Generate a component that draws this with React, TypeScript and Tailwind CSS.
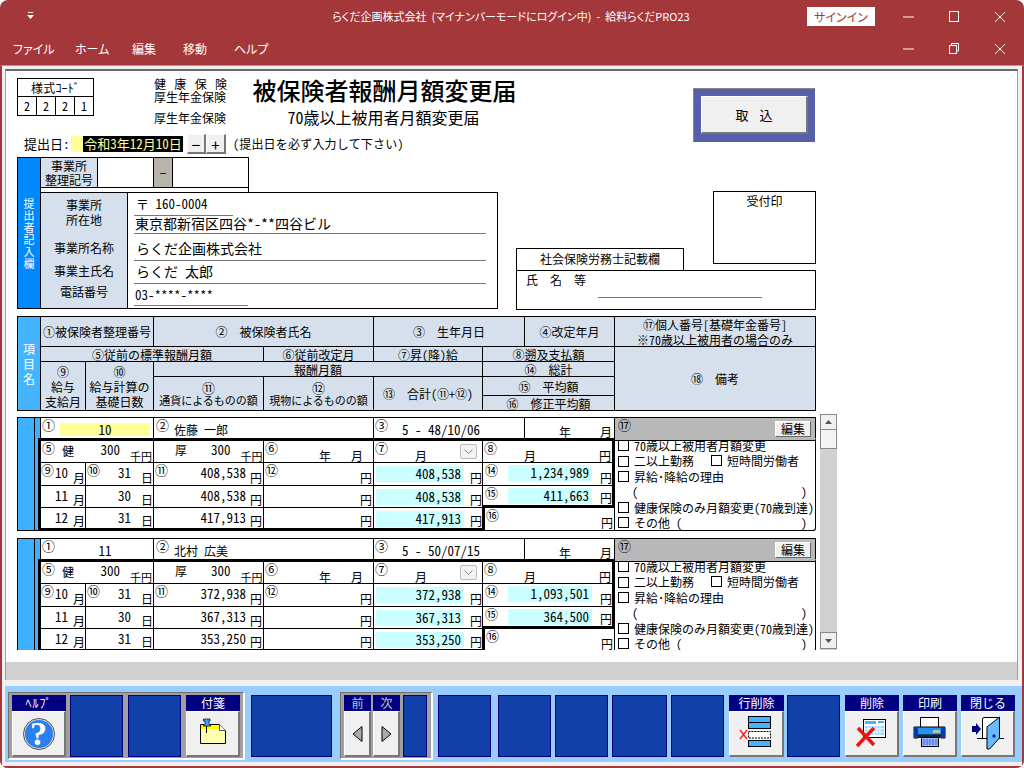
const UI_FONT = "font-['Noto_Sans_CJK_JP','Noto_Sans',sans-serif]";

// shared grid tracks of the form
const TRACKS = "grid-cols-[23px_45px_68px_110px_110px_109px_42px_90px_201px]";
const LBL = "border-r border-b border-black bg-[#d6e0ec] flex flex-col items-center justify-center leading-[15px] text-center whitespace-nowrap";
const LBL_SM = "border-r border-b border-black bg-[#d6e0ec] flex flex-col items-center justify-center leading-[13px] text-center text-[11px] whitespace-nowrap";
const BEVEL = "bg-[#f0f0f0] border-t border-l border-white border-r-2 border-b-2 border-r-[#777777] border-b-[#777777]";

const Slot = ({ className }: { className: string }) => (
  <div className={`h-[62px] border border-[#000080] bg-[#1040a8] shrink-0 ${className}`} />
);

const ToolBtn = ({ label, className, labelClass, children }: { label: string; className: string; labelClass?: string; children: React.ReactNode }) => (
  <div className={`flex flex-col h-[62px] shrink-0 ${className}`}>
    <div className={`h-[16px] bg-[#000080] text-[12px] leading-[16px] text-center ${labelClass ?? "text-white"}`}>{label}</div>
    <div className={`h-[46px] ${BEVEL} flex items-center justify-center overflow-hidden`}>
      {children}
    </div>
  </div>
);

const WinBtns = ({ restore }: { restore?: boolean }) => (
  <div className="flex items-center">
    <svg width="45" height="12" viewBox="0 0 45 12"><path d="M0 6H11" stroke="#fff" strokeWidth="1" /></svg>
    <svg width="46" height="12" viewBox="0 0 46 12" fill="none" stroke="#fff">
      {restore ? (
        <>
          <rect x="1.5" y="2.5" width="7" height="8" />
          <path d="M3.5 2V.5H10.5V8H9" />
        </>
      ) : (
        <rect x="1.5" y=".5" width="9" height="10" />
      )}
    </svg>
    <svg width="24" height="12" viewBox="0 0 24 12" fill="none" stroke="#fff"><path d="M1 1L11 11M11 1L1 11" /></svg>
  </div>
);

const Box = () => <span className="inline-block w-[11px] h-[11px] border border-black bg-white shrink-0" />;

type RecordData = {
  no: string;
  yellow?: boolean;
  name: string;
  birth: string;
  rows: { m: string; d: string; a: string }[];
  total: string;
  avg: string;
};

const records: RecordData[] = [
  {
    no: "10",
    yellow: true,
    name: "佐藤 一郎",
    birth: "5 - 48/10/06",
    rows: [
      { m: "10", d: "31", a: "408,538" },
      { m: "11", d: "30", a: "408,538" },
      { m: "12", d: "31", a: "417,913" },
    ],
    total: "1,234,989",
    avg: "411,663",
  },
  {
    no: "11",
    name: "北村 広美",
    birth: "5 - 50/07/15",
    rows: [
      { m: "10", d: "31", a: "372,938" },
      { m: "11", d: "30", a: "367,313" },
      { m: "12", d: "31", a: "353,250" },
    ],
    total: "1,093,501",
    avg: "364,500",
  },
];

const CELL = "border-r border-b border-black flex relative whitespace-nowrap";
const NUM = "text-[13px] leading-[16px] -mt-px h-[16px] shrink-0";

const Record = ({ r }: { r: RecordData }) => {
  return (
    <div className={`grid ${TRACKS} grid-rows-[20px_25px_23px_22px_23px] border-t border-l border-black text-[13px] leading-[14px] w-[799px] shrink-0`}>
      {/* blue strip */}
      <div className="row-span-5 flex bg-[#3db0ff] border-b border-r border-black">
        <div className="w-[17px] border-r border-black" />
      </div>
      {/* top row */}
      <div className="col-span-2 flex border-r border-black pl-[1px]">
        <span className={NUM}>①</span>
        <div className={`ml-[5px] mt-[5px] w-[90px] h-[13px] text-center leading-[14px] ${r.yellow ? "bg-[#ffff99]" : ""}`}>{r.no}</div>
      </div>
      <div className="col-span-2 flex border-r border-black pl-[2px]">
        <span className={NUM}>②</span>
        <div className="ml-[5px] mt-[4px] text-[12px] leading-[15px] whitespace-nowrap">{r.name}</div>
      </div>
      <div className="col-span-2 flex border-r border-black pl-[1px]">
        <span className={NUM}>③</span>
        <div className="ml-[14px] mt-[5px] whitespace-nowrap">{r.birth}</div>
      </div>
      <div className="flex items-end border-r border-black text-[12px] leading-[13px] pl-[34px] gap-[29px]">
        <span>年</span>
        <span>月</span>
      </div>
      <div className="flex justify-between bg-[#b8b8b8] border-r border-black pl-[3px] pr-[4px]">
        <span className={NUM}>⑰</span>
        <div className="mt-[3px] w-[36px] h-[16px] bg-[#f0f0f0] border border-white border-r-[#666666] border-b-[#666666] text-[12px] leading-[14px] text-center">編集</div>
      </div>

      {/* 5-8 row */}
      <div className={`${CELL} col-span-2 border-t-[3px] border-l-[3px] -ml-[3px] text-[12px]`}>
        <span className={`${NUM} ml-[1px]`}>⑤</span>
        <span className="ml-[7px] mt-[3px]">健</span>
        <span className="ml-auto mt-[2px] text-[13px]">300</span>
        <span className="ml-[10px] mr-[1px] self-end text-[11px] leading-[12px]">千円</span>
      </div>
      <div className={`${CELL} border-t-[3px]`}>
        <span className="ml-[21px] mt-[2px] text-[12px]">厚</span>
        <span className="ml-[24px] mt-[2px]">300</span>
        <span className="ml-[10px] self-end text-[11px] leading-[12px]">千円</span>
      </div>
      <div className={`${CELL} border-t-[3px] text-[12px]`}>
        <span className={`${NUM} ml-[1px]`}>⑥</span>
        <span className="ml-[41px] self-end leading-[13px]">年</span>
        <span className="ml-[20px] self-end leading-[13px]">月</span>
      </div>
      <div className={`${CELL} border-t-[3px] text-[12px]`}>
        <span className={`${NUM} ml-[1px]`}>⑦</span>
        <span className="ml-[27px] self-end leading-[13px]">月</span>
        <span className="ml-[33px] mt-[3px] w-[17px] h-[15px] border border-[#bbbbbb] rounded-[2px] bg-[#f4f4f4] flex items-center justify-center">
          <svg width="9" height="5" viewBox="0 0 9 5" fill="none" stroke="#888888"><path d="M.5.5L4.5 4.5L8.5.5" /></svg>
        </span>
      </div>
      <div className={`${CELL} col-span-2 border-t-[3px] border-r-[3px] text-[12px]`}>
        <span className={`${NUM} ml-[1px]`}>⑧</span>
        <span className="ml-[27px] self-end leading-[13px]">月</span>
        <span className="ml-auto mr-[1px] self-end leading-[13px]">円</span>
      </div>
      {/* remarks */}
      <div className="row-span-4 border-r border-b border-black border-t-2 border-t-[#b8b8b8] rounded-br-[3px] text-[12px]">
        <div className="border-t border-black pl-[3px] h-full">
          <div className="-mt-[3px] flex flex-col leading-[15.4px] whitespace-nowrap">
            <div className="flex items-center gap-[5px]"><Box />70歳以上被用者月額変更</div>
            <div className="flex items-center gap-[5px]"><Box />二以上勤務<span className="ml-[12px]"><Box /></span>短時間労働者</div>
            <div className="flex items-center gap-[5px]"><Box />昇給･降給の理由</div>
            <div className="flex justify-between pl-[14px] pr-[8px]"><span>(</span><span>)</span></div>
            <div className="flex items-center gap-[5px]"><Box />健康保険のみ月額変更(70歳到達)</div>
            <div className="flex items-center gap-[5px]"><Box />その他 (<span className="ml-auto mr-[8px]">)</span></div>
          </div>
        </div>
      </div>

      {/* amounts */}
      {r.rows.map((row, i) => (
        <RecordRow key={row.m} row={row} i={i} r={r} />
      ))}
    </div>
  );
};

const RecordRow = ({ row, i, r }: { row: RecordData["rows"][number]; i: number; r: RecordData }) => {
  const last = i === 2;
  const bottom = last ? "border-b-[3px]" : "";
  return (
    <>
      <div className={`${CELL} border-l-[3px] -ml-[3px] ${bottom} text-[12px]`}>
        <span className={`${NUM} w-[14px]`}>{i === 0 ? "⑨" : ""}</span>
        <span className="mt-[3px] text-[13px]">{row.m}</span>
        <span className="ml-[5px] self-end leading-[14px]">月</span>
      </div>
      <div className={`${CELL} ${bottom} text-[12px]`}>
        <span className={`${NUM} w-[14px] ml-[1px]`}>{i === 0 ? "⑩" : ""}</span>
        <span className="ml-[17px] mt-[3px] text-[13px]">{row.d}</span>
        <span className="ml-[10px] self-end leading-[14px]">日</span>
      </div>
      <div className={`${CELL} ${bottom} text-[12px]`}>
        <span className={`${NUM} w-[14px] ml-[1px]`}>{i === 0 ? "⑪" : ""}</span>
        <span className="ml-auto mt-[3px] text-[13px]">{row.a}</span>
        <span className="ml-[4px] mr-[1px] self-end leading-[14px]">円</span>
      </div>
      <div className={`${CELL} ${bottom} text-[12px]`}>
        <span className={`${NUM} w-[14px] ml-[1px]`}>{i === 0 ? "⑫" : ""}</span>
        <span className="ml-auto mr-[1px] self-end leading-[14px]">円</span>
      </div>
      <div className={`${CELL} ${bottom} ${last ? "border-r-[3px] -mr-[2px] z-10" : ""} text-[12px]`}>
        <div className="ml-[2px] mt-[3px] w-[88px] h-[16px] bg-[#ccffff] text-right pr-[3px] text-[13px] leading-[16px]">{row.a}</div>
        <span className="ml-[6px] self-end leading-[14px]">円</span>
      </div>
      {i === 0 && <Sum label="⑭" v={r.total} />}
      {i === 1 && <Sum label="⑮" v={r.avg} thick />}
      {i === 2 && (
        <div className={`${CELL} col-span-2 text-[12px]`}>
          <span className={`${NUM} ml-[3px]`}>⑯</span>
          <span className="ml-auto mr-[1px] self-end leading-[14px]">円</span>
        </div>
      )}
    </>
  );
};

const Sum = ({ label, v, thick }: { label: string; v: string; thick?: boolean }) => (
  <div className={`${CELL} col-span-2 border-r-[3px] ${thick ? "border-b-[3px]" : ""} text-[12px]`}>
    <span className={`${NUM} ml-[2px] w-[14px]`}>{label}</span>
    <div className="ml-[9px] mt-[2px] w-[84px] h-[16px] bg-[#ccffff] text-right pr-[3px] text-[13px] leading-[16px]">{v}</div>
    <span className="ml-[8px] self-end leading-[14px]">円</span>
  </div>
);

export default function App() {
  return (
    <div className={`w-[1024px] h-[768px] overflow-hidden rounded-lg bg-[#a4373a] flex flex-col text-black ${UI_FONT}`}>
      {/* title bar */}
      <div className="h-[33px] shrink-0 flex items-center text-white text-[12px] [font-feature-settings:'palt']">
        <svg className="ml-[27px] mb-[1px]" width="7" height="8" viewBox="0 0 7 8" fill="#fff">
          <path d="M1 0H6V1H1ZM0 3H7L3.5 7Z" />
        </svg>
        <div className="ml-[297px] w-[360px] text-center text-[11px] whitespace-nowrap">らくだ企画株式会社 &nbsp;(マイナンバーモードにログイン中) &nbsp;- &nbsp;給料らくだPRO23</div>
        <div className="ml-[116px] w-[68px] h-[19px] bg-white text-[#a4373a] text-[12px] leading-[19px] text-center">サインイン</div>
        <div className="ml-[28px]"><WinBtns /></div>
      </div>
      {/* menu bar */}
      <div className="h-[32px] shrink-0 flex items-center text-white text-[12px] [font-feature-settings:'palt']">
        <span className="ml-[13px] w-[62px]">ファイル</span>
        <span className="w-[57px]">ホーム</span>
        <span className="w-[51px]">編集</span>
        <span className="w-[51px]">移動</span>
        <span className="w-[300px]">ヘルプ</span>
        <div className="ml-[369px]"><WinBtns restore /></div>
      </div>

      {/* body */}
      <div className="flex-1 bg-[#f0f0f0] border-x-2 border-b-2 border-[#a4373a] flex flex-col border-t border-t-[#a0a0a0] min-h-0">
        <div className="h-[3px] shrink-0" />
        <div className="ml-[3px] mr-[4px] h-[611px] shrink-0 border-t-2 border-x border-[#696969] border-x-[#a0a0a0] flex flex-col">
          <div className="flex-1 min-h-0 bg-white pl-[11px] pt-[7px] text-[12px] overflow-hidden [font-feature-settings:'hwid']">
            {/* head */}
            <div className="flex h-[79px]">
              <div className="w-[676px] flex flex-col">
                <div className="flex h-[56px]">
                  <div className="w-[77px] h-[38px] border border-black">
                    <div className="h-[18px] border-b border-black text-center text-[12px] leading-[17px] tracking-[.2px]">様式ｺｰﾄﾞ</div>
                    <div className="flex h-[18px] text-[12px] leading-[18px] text-center">
                      <div className="w-[19px] border-r border-black">2</div>
                      <div className="w-[19px] border-r border-black">2</div>
                      <div className="w-[19px] border-r border-black">2</div>
                      <div className="w-[18px]">1</div>
                    </div>
                  </div>
                  <div className="ml-[60px] w-[73px] -mt-px flex flex-col text-[12px] leading-[14px]">
                    <div className="flex justify-between h-[13px]"><span>健</span><span>康</span><span>保</span><span>険</span></div>
                    <div>厚生年金保険</div>
                    <div className="mt-[7px]">厚生年金保険</div>
                  </div>
                  <div className="ml-[26px] w-[265px] flex flex-col items-center">
                    <div className="text-[24px] leading-[24px] whitespace-nowrap font-medium -ml-[2px]">被保険者報酬月額変更届</div>
                    <div className="mt-[5px] mr-[4px] text-[16px] leading-[20px] whitespace-nowrap">70歳以上被用者月額変更届</div>
                  </div>
                </div>
                <div className="flex h-[20px] items-center text-[13px]">
                  <span className="ml-[7px] w-[47px] whitespace-nowrap">提出日:</span>
                  <div className="w-[112px] h-[16px] bg-[#ffff99] flex justify-end leading-[16px]">
                    <span className="bg-black text-[#ffff99] w-[100px] text-center whitespace-nowrap">令和3年12月10日</span>
                  </div>
                  <div className={`ml-[4px] w-[19px] h-[20px] ${BEVEL} flex items-center justify-center text-[16px] leading-none`}>−</div>
                  <div className={`w-[20px] h-[20px] ${BEVEL} flex items-center justify-center text-[16px] leading-none`}>+</div>
                  <span className="ml-[7px] text-[12px] tracking-[.2px] whitespace-nowrap">(提出日を必ず入力して下さい)</span>
                </div>
              </div>
              <div className="mt-[10px] w-[122px] h-[54px] bg-[#5560a8] border-t border-l border-[#888888] p-[7px]">
                <div className={`h-[38px] ${BEVEL} flex items-center justify-center text-[13px] gap-[11px]`}>
                  <span>取</span><span>込</span>
                </div>
              </div>
            </div>

            {/* submitter */}
            <div className="flex h-[152px]">
              <div className="w-[24px] bg-[#0088ff] border border-black text-white text-[11px] leading-[12px] flex flex-col items-center justify-center shrink-0">
                {"提出者記入欄".split("").map((c) => <span key={c} className="h-[12px]">{c}</span>)}
              </div>
              <div className="w-[458px] -ml-px flex flex-col shrink-0">
                <div className="w-[209px] h-[31px] flex border-t border-r border-black">
                  <div className="w-[58px] border-l border-r border-b border-black bg-[#d6e0ec] text-center text-[12px] leading-[14px] pt-px whitespace-nowrap">事業所<br />整理記号</div>
                  <div className="w-[56px] border-r border-b border-black" />
                  <div className="w-[19px] border-r border-b border-black bg-[#b8b4ac] flex items-center justify-center">−</div>
                  <div className="flex-1 border-b border-black" />
                </div>
                <div className="w-[209px] h-[4px] border-r border-l border-black" />
                <div className="flex-1 border border-black flex">
                  <div className="w-[87px] border-r border-black bg-[#d6e0ec] flex flex-col items-center text-[12px]">
                    <div className="mt-[4px] leading-[15px] text-center">事業所<br />所在地</div>
                    <div className="mt-[13px] leading-[15px]">事業所名称</div>
                    <div className="mt-[8px] leading-[15px]">事業主氏名</div>
                    <div className="mt-[6px] leading-[15px]">電話番号</div>
                  </div>
                  <div className="flex-1 pl-[6px] pr-[11px] flex flex-col text-[14px] leading-[18px]">
                    <div className="w-[99px] h-[23px] border-b border-[#777777] pt-[2px] text-[13px] pl-[2px] whitespace-nowrap">〒 160-0004</div>
                    <div className="h-[18px] border-b border-[#777777] whitespace-nowrap pl-[1px] leading-[15px]">東京都新宿区四谷*-**四谷ビル</div>
                    <div className="h-[27px] border-b border-[#777777] pt-[5px] pl-[2px]">らくだ企画株式会社</div>
                    <div className="h-[23px] border-b border-[#777777] pt-[1px] pl-[2px]">らくだ 太郎</div>
                    <div className="w-[114px] h-[22px] border-b border-[#777777] pt-[2px] pl-[1px] text-[13px] whitespace-nowrap">03-****-****</div>
                  </div>
                </div>
              </div>
              <div className="ml-[18px] w-[300px] grid grid-cols-[168px_29px_103px] grid-rows-[34px_57px_16px_7px_39px]">
                <div className="col-start-3 row-start-2 row-span-2 border border-black text-center text-[12px] leading-[17px]">受付印</div>
                <div className="col-start-1 row-start-3 row-span-2 border border-black text-center text-[12px] leading-[20px]">社会保険労務士記載欄</div>
                <div className="col-span-3 row-start-5 border border-black -mt-px flex flex-col">
                  <div className="ml-[9px] text-[12px] tracking-[3px]">氏 名 等</div>
                  <div className="ml-[81px] mt-[8px] w-[164px] border-b border-[#777777]" />
                </div>
              </div>
            </div>

            {/* column headers */}
            <div className={`mt-[7px] grid ${TRACKS} grid-rows-[30px_15px_15px_19px_15px] border-t border-l border-black w-[799px] text-[12px]`}>
              <div className="row-span-5 bg-[#44b4ff] border-r border-b border-black text-white text-[12px] leading-[15px] flex flex-col items-center justify-center">
                <span>項</span><span>目</span><span>名</span>
              </div>
              <div className={`${LBL} col-span-2`}>①被保険者整理番号</div>
              <div className={`${LBL} col-span-2`}>② &nbsp;被保険者氏名</div>
              <div className={`${LBL} col-span-2`}>③ &nbsp;生年月日</div>
              <div className={LBL}>④改定年月</div>
              <div className={LBL}>⑰個人番号[基礎年金番号]<br />※70歳以上被用者の場合のみ</div>

              <div className={`${LBL} col-span-3`}>⑤従前の標準報酬月額</div>
              <div className={LBL}>⑥従前改定月</div>
              <div className={LBL}>⑦昇(降)給</div>
              <div className={`${LBL} col-span-2`}>⑧遡及支払額</div>
              <div className={`${LBL} row-span-4`}>⑱ &nbsp;備考</div>

              <div className={`${LBL} row-span-3`}>⑨<br />給与<br />支給月</div>
              <div className={`${LBL} row-span-3`}>⑩<br />給与計算の<br />基礎日数</div>
              <div className={`${LBL} col-span-3`}>報酬月額</div>
              <div className={`${LBL} col-span-2`}>⑭ &nbsp;総計</div>
              <div className={`${LBL_SM} row-span-2`}><span className="text-[13px]">⑪</span><span>通貨によるものの額</span></div>
              <div className={`${LBL_SM} row-span-2`}><span className="text-[13px]">⑫</span><span>現物によるものの額</span></div>
              <div className={`${LBL} row-span-2`}>⑬ &nbsp;合計(⑪+⑫)</div>
              <div className={`${LBL} col-span-2`}>⑮ &nbsp;平均額</div>
              <div className={`${LBL} col-span-2`}>⑯ &nbsp;修正平均額</div>
            </div>

            {/* records */}
            <div className="mt-[6px] flex">
              <div className="w-[799px] h-[233px] overflow-hidden flex flex-col gap-[7px]">
                {records.map((r) => <Record key={r.no} r={r} />)}
              </div>
              <div className="ml-[4px] -mt-[3px] w-[17px] h-[236px] bg-[#d0d0d0] flex flex-col justify-between">
                <div>
                  <div className="h-[16px] bg-[#f0f0f0] border border-[#888888] flex items-center justify-center">
                    <svg width="7" height="4" viewBox="0 0 7 4" fill="#555555"><path d="M3.5 0L7 4H0Z" /></svg>
                  </div>
                  <div className="h-[19px] bg-[#f4f4f4] border border-[#888888] border-t-0" />
                </div>
                <div className="h-[17px] mb-[1px] bg-[#f0f0f0] border border-[#888888] flex items-center justify-center">
                  <svg width="7" height="4" viewBox="0 0 7 4" fill="#555555"><path d="M3.5 4L7 0H0Z" /></svg>
                </div>
              </div>
            </div>
          </div>
          <div className="h-[18px] shrink-0 bg-[#d0d0d0]" />
        </div>
        <div className="h-[6px] shrink-0" />

        {/* toolbar */}
        <div className="ml-[3px] h-[76px] shrink-0 bg-[#99ccff] flex items-start pt-[6px] pl-[3px]">
          <div className="w-[237px] h-[68px] shrink-0 bg-[#a0a0a0] border-t border-l border-[#707070] border-r-2 border-b-2 border-r-white border-b-white flex pt-[2px] pl-[3px]">
            <ToolBtn label="ﾍﾙﾌﾟ" className="w-[54px]" labelClass="text-white tracking-[1px]">
              <div className="w-[32px] h-[32px] rounded-full border border-[#555555] p-[1px] bg-[#dddddd]">
                <div className="w-full h-full rounded-full bg-[#2a80f0] text-white text-[34px] leading-[28px] font-bold text-center font-['Liberation_Serif',serif]">?</div>
              </div>
            </ToolBtn>
            <Slot className="w-[53px] ml-[4px]" />
            <Slot className="w-[53px] ml-[5px]" />
            <ToolBtn label="付箋" className="w-[54px] ml-[5px]">
              <svg width="51" height="43" viewBox="1 1 51 43">
                <path d="M14.5 13.5H33.5L39.5 19.5V32.5H14.5Z" fill="#ffffb0" stroke="#000" />
                <path d="M15 14H33L37 18H15Z" fill="#ffff00" />
                <path d="M33.5 13.5V19.5H39.5" fill="#fff" stroke="#555555" />
                <path d="M20.5 15V22" stroke="#000" />
                <path d="M17.5 8H24V10H23V13L25 15H17L19 13V10H17.5Z" fill="#44a0ff" stroke="#000" strokeWidth=".7" />
              </svg>
            </ToolBtn>
          </div>
          <Slot className="w-[81px] ml-[6px] mt-[3px]" />
          <div className="ml-[8px] w-[93px] h-[68px] shrink-0 bg-[#a0a0a0] border-t border-l border-[#707070] border-r-2 border-b-2 border-r-white border-b-white flex pt-[2px] pl-[3px]">
            <ToolBtn label="前" className="w-[27px]" labelClass="text-[#c8c8c8]">
              <svg width="11" height="16" viewBox="0 0 11 16"><path d="M10 .5V15.5L1 8Z" fill="#aaaaaa" stroke="#000" /></svg>
            </ToolBtn>
            <ToolBtn label="次" className="w-[27px] ml-[2px]" labelClass="text-[#c8c8c8]">
              <svg width="11" height="16" viewBox="0 0 11 16"><path d="M1 .5V15.5L10 8Z" fill="#aaaaaa" stroke="#000" /></svg>
            </ToolBtn>
            <Slot className="w-[24px] ml-[3px]" />
          </div>
          <Slot className="w-[53px] ml-[5px] mt-[3px]" />
          <Slot className="w-[53px] ml-[7px] mt-[3px]" />
          <Slot className="w-[53px] ml-[4px] mt-[3px]" />
          <Slot className="w-[55px] ml-[4px] mt-[3px]" />
          <Slot className="w-[53px] ml-[4px] mt-[3px]" />
          <div className="ml-[5px] mt-[3px]">
            <ToolBtn label="行削除" className="w-[55px]">
              <svg width="52" height="43" viewBox="1 1 52 43">
                <g fill="#44b4ff" stroke="#000">
                  <rect x="19.5" y="5.5" width="22" height="12" />
                  <path d="M19.5 11.5H41.5" />
                  <rect x="19.5" y="29.5" width="22" height="6" />
                </g>
                <rect x="19.5" y="20.5" width="22" height="6.5" fill="#fff" stroke="#000" strokeDasharray="2 1" />
                <path d="M11 19L18 28M18 19L11 28" stroke="#ff2020" strokeWidth="1.4" fill="none" />
              </svg>
            </ToolBtn>
          </div>
          <Slot className="w-[53px] ml-[3px] mt-[3px]" />
          <div className="ml-[5px] mt-[3px]">
            <ToolBtn label="削除" className="w-[54px]">
              <svg width="51" height="43" viewBox="1 1 51 43">
                <rect x="18.5" y="8.5" width="22" height="18" fill="#fff" stroke="#000" />
                <rect x="20" y="10" width="11" height="3" fill="#44b4ff" />
                <rect x="33" y="10" width="6" height="2" fill="#44b4ff" />
                <rect x="20" y="15" width="19" height="9" fill="#99d0ff" />
                <path d="M23 15V24M26 15V24M29 15V24M32 15V24M35 15V24M20 18H39M20 21H39" stroke="#fff" />
                <path d="M13 17L29 34M29 17L12 35" stroke="#ee1111" strokeWidth="3.4" fill="none" />
              </svg>
            </ToolBtn>
          </div>
          <div className="ml-[4px] mt-[3px]">
            <ToolBtn label="印刷" className="w-[54px]">
              <svg width="51" height="43" viewBox="1 1 51 43">
                <rect x="17.5" y="6.5" width="18" height="10" fill="#fff" stroke="#000" />
                <path d="M11 16H42V27H38V24H15V27H11Z" fill="#2a90ee" stroke="#000" />
                <rect x="11" y="16" width="4" height="11" fill="#0a3aa8" />
                <rect x="38" y="16" width="4" height="11" fill="#0a3aa8" />
                <rect x="15" y="24" width="23" height="3" fill="#102040" />
                <rect x="30" y="19" width="7" height="3" fill="#c0c0a0" />
                <rect x="18.5" y="26.5" width="17" height="9" fill="#ccddff" stroke="#000" />
                <path d="M19 29H35M19 31H35M19 33H35M21 27V35M24 27V35M27 27V35M30 27V35M33 27V35" stroke="#2050e0" strokeWidth=".7" />
              </svg>
            </ToolBtn>
          </div>
          <div className="ml-[4px] mt-[3px]">
            <ToolBtn label="閉じる" className="w-[54px]">
              <svg width="51" height="43" viewBox="1 1 51 43">
                <path d="M11 15H15V12L20 18L15 24V21H11Z" fill="#000080" />
                <path d="M16 27.5H43" stroke="#000" />
                <path d="M21.5 27V8Q21.5 6.5 23 6.5H38" fill="#fff" stroke="#000" />
                <path d="M38.5 6V27L28.5 38H26V16Z" fill="#66bbff" stroke="#000" />
                <path d="M31 25H35M33 23V27" stroke="#000080" />
              </svg>
            </ToolBtn>
          </div>
        </div>
      </div>
    </div>
  );
}
